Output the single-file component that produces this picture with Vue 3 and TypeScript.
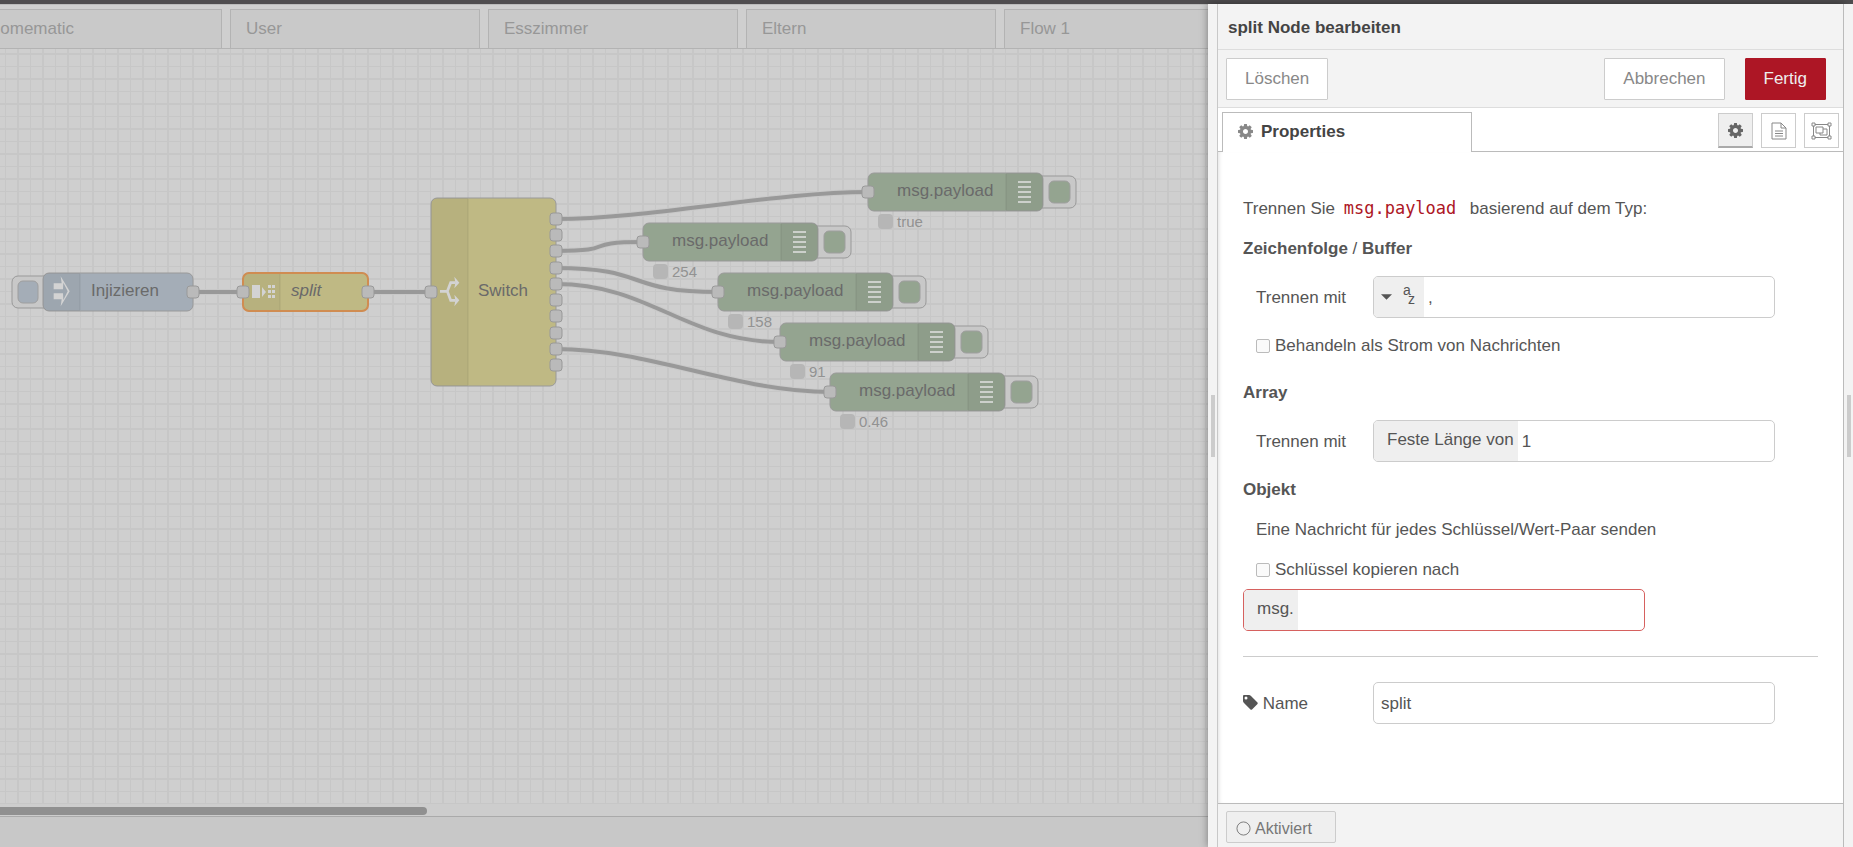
<script setup lang="ts">
import { ref } from 'vue'

interface DebugNode { x: number; y: number; status: string; port: number }

const tabs = ['Homematic', 'User', 'Esszimmer', 'Eltern', 'Flow 1']

const debugNodes: DebugNode[] = [
  { x: 868, y: 124, status: 'true', port: 0 },
  { x: 643, y: 174, status: '254', port: 2 },
  { x: 718, y: 224, status: '158', port: 3 },
  { x: 780, y: 274, status: '91', port: 4 },
  { x: 830, y: 324, status: '0.46', port: 8 },
]

const switchX = 556
const portY = (i: number): number => Math.round(169.75 + 16.25 * i)
const switchPorts = Array.from({ length: 10 }, (_, i) => portY(i))

const NODE_WIDTH = 125
function wire(x1: number, y1: number, x2: number, y2: number): string {
  const distance = Math.hypot(x2 - x1, y2 - y1)
  const scale = distance < NODE_WIDTH ? 0.75 * (distance / NODE_WIDTH) : 0.75
  const c = Math.round(scale * NODE_WIDTH)
  return `M${x1} ${y1}C${x1 + c} ${y1} ${x2 - c} ${y2} ${x2} ${y2}`
}

const wires = [
  wire(193, 243, 243, 243),
  wire(368, 243, 431, 243),
  ...debugNodes.map((n) => wire(switchX, portY(n.port), n.x, n.y + 19)),
]

const separator = ref(',')
const arrayLength = ref('1')
const keyTarget = ref('')
const nodeName = ref('split')
const stream = ref(false)
const copyKey = ref(false)

const cog =
  'M1024 640q0 106-75 181t-181 75-181-75-75-181 75-181 181-75 181 75 75 181zm512-109v222q0 12-8 23t-20 13l-185 28q-19 54-39 91 35 50 107 138 10 12 10 25t-9 23q-27 37-99 108t-94 71q-12 0-26-9l-138-108q-44 23-91 38-16 136-29 186-7 28-36 28h-222q-14 0-24.5-8.500t-11.500-21.500l-28-184q-49-16-90-37l-141 107q-10 9-25 9-14 0-25-11-126-114-165-168-7-10-7-23 0-12 8-23 15-21 51-66.500t54-70.500q-27-50-41-99l-183-27q-13-2-21-12.500t-8-23.500v-222q0-12 8-23t19-13l186-28q14-46 39-92-40-57-107-138-10-12-10-24 0-10 9-23 26-36 98.500-107.500t94.500-71.500q13 0 26 10l138 107q44-23 91-38 16-136 29-186 7-28 36-28h222q14 0 24.500 8.500t11.500 21.500l28 184q49 16 90 37l142-107q9-9 24-9 13 0 25 10 129 119 165 170 7 8 7 22 0 12-8 23-15 21-51 66.500t-54 70.500q26 50 41 98l183 28q13 2 21 12.500t8 23.500z'
</script>

<template>
  <div class="editor">
    <div class="topbar"></div>
    <div class="main">
      <main class="workspace">
        <nav class="flow-tabs">
          <a v-for="t in tabs" :key="t" href="#" class="flow-tab">{{ t }}</a>
        </nav>
        <svg class="canvas" role="img" aria-label="Flow">
          <defs>
            <pattern id="grid" width="25" height="25" patternUnits="userSpaceOnUse">
              <rect class="grid-line" x="17" y="0" width="2" height="25" />
              <rect class="grid-line" x="5" y="0" width="1" height="25" />
              <rect class="grid-line" x="0" y="4" width="25" height="2" />
              <rect class="grid-line" x="0" y="17" width="25" height="1" />
            </pattern>
          </defs>
          <rect width="100%" height="100%" fill="url(#grid)" />

          <path v-for="w in wires" :key="w" class="wire-halo" :d="w" />
          <path v-for="w in wires" :key="w" class="wire" :d="w" />

          <!-- inject node -->
          <rect class="button-frame" x="12" y="227" width="44" height="32" rx="6" />
          <rect class="button-face inject" x="18" y="232" width="20" height="22" rx="5" />
          <rect class="node inject" x="43" y="224" width="150" height="38" rx="6" />
          <path class="shade" d="M80 224H49a6 6 0 0 0-6 6v26a6 6 0 0 0 6 6H80z" />
          <path class="divider" d="M80 225v36" />
          <svg x="53" y="227" width="18" height="32" viewBox="0 0 54 96">
            <path class="glyph" fill-rule="evenodd" d="M2 22H26L23 1L50 46L23 91L26 70H2V52H30L31 72L44 46L31 20L30 40H2Z" />
          </svg>
          <text class="label" x="91" y="247">Injizieren</text>
          <rect class="port" x="187" y="237" width="12" height="12" rx="3" />

          <!-- split node -->
          <rect class="node function" x="243" y="224" width="125" height="38" rx="6" />
          <path class="shade" d="M280 224H249a6 6 0 0 0-6 6v26a6 6 0 0 0 6 6H280z" />
          <path class="divider" d="M280 225v36" />
          <rect class="selection" x="243" y="224" width="125" height="38" rx="6" />
          <path class="glyph" d="M252 236h8v13h-8zM262 238l4 5-4 5zM268 236h3v3h-3zM272 236h3v3h-3zM268 241h3v3h-3zM272 241h3v3h-3zM268 246h3v3h-3zM272 246h3v3h-3z" />
          <text class="label italic" x="291" y="247">split</text>
          <rect class="port" x="237" y="237" width="12" height="12" rx="3" />
          <rect class="port" x="362" y="237" width="12" height="12" rx="3" />

          <!-- switch node -->
          <rect class="node function" x="431" y="149" width="125" height="188" rx="6" />
          <path class="shade" d="M468 149H437a6 6 0 0 0-6 6v176a6 6 0 0 0 6 6H468z" />
          <path class="divider" d="M468 150v186" />
          <svg x="440" y="227" width="20" height="32" viewBox="0 0 60 96">
            <path class="branch" d="M0 46H22M22 46L32 20H47M22 46L32 73H47" />
            <path class="glyph" d="M43 2L58 20L43 37L46 20ZM43 56L58 73L43 91L46 73Z" />
          </svg>
          <text class="label" x="478" y="247">Switch</text>
          <rect class="port" x="425" y="237" width="12" height="12" rx="3" />
          <rect v-for="y in switchPorts" :key="y" class="port" x="550" :y="y - 6" width="12" height="12" rx="3" />

          <!-- debug nodes -->
          <svg v-for="n in debugNodes" :key="n.x" class="debug" :x="n.x" :y="n.y" width="210" height="60">
            <rect class="button-frame" x="165" y="3" width="43" height="32" rx="6" />
            <rect class="button-face output" x="181" y="8" width="21" height="22" rx="5" />
            <rect class="node output" x="0" y="0" width="175" height="38" rx="6" />
            <path class="shade" d="M138 0H169a6 6 0 0 1 6 6v26a6 6 0 0 1-6 6H138z" />
            <path class="divider" d="M138 1v36" />
            <path class="bars" d="M150 9h13M150 14h13M150 19h13M150 24h13M150 29h13" />
            <text class="label" x="29" y="23">msg.payload</text>
            <rect class="port" x="-6" y="13" width="12" height="12" rx="3" />
            <rect class="status-dot" x="10" y="41" width="15" height="15" rx="4" />
            <text class="status" x="29" y="54">{{ n.status }}</text>
          </svg>
        </svg>
        <div class="scroll-track"><div class="scroll-thumb"></div></div>
        <footer class="workspace-footer"></footer>
      </main>

      <aside class="tray">
        <div class="tray-grip"><span class="grip"></span></div>
        <form class="tray-panel" @submit.prevent>
          <h1 class="tray-title">split Node bearbeiten</h1>
          <div class="tray-toolbar">
            <button type="button" class="btn">Löschen</button>
            <span class="actions">
              <button type="button" class="btn">Abbrechen</button>
              <button type="submit" class="btn primary">Fertig</button>
            </span>
          </div>
          <div class="tray-tabs">
            <div class="tray-tab">
              <svg class="icon" viewBox="0 -128 1536 1536"><path fill-rule="evenodd" :d="cog" /></svg>
              Properties
            </div>
            <div class="tray-tab-buttons">
              <button type="button" class="square active" aria-label="Properties">
                <svg class="icon" viewBox="0 -128 1536 1536"><path fill-rule="evenodd" :d="cog" /></svg>
              </button>
              <button type="button" class="square" aria-label="Description">
                <svg class="outline doc" viewBox="0 0 16 18">
                  <path d="M1 1H10L15 6V17H1ZM10 1V6H15M4 9H12M4 11.500H12M4 14H12" />
                </svg>
              </button>
              <button type="button" class="square" aria-label="Appearance">
                <svg class="outline group" viewBox="0 0 21 18">
                  <path d="M4 2.500H17M4 15.500H17M2.500 4V14M18.500 4V14M1 1H4V4H1ZM17 1H20V4H17ZM1 14H4V17H1ZM17 14H20V17H17ZM5 5H12V11H5ZM12 7H16V13H9V11" />
                </svg>
              </button>
            </div>
          </div>

          <div class="tray-body">
            <p class="line">Trennen Sie <code>msg.payload</code>&nbsp; basierend auf dem Typ:</p>
            <p class="line"><b>Zeichenfolge</b> / <b>Buffer</b></p>
            <div class="row indent">
              <label for="sep">Trennen mit</label>
              <div class="typed">
                <button type="button" class="type" aria-label="Typ">
                  <svg class="caret" viewBox="0 0 12 6"><path d="M0 0H12L6 6Z" /></svg>
                  <svg class="az" viewBox="0 0 13 20"><text x="0" y="9">a</text><text x="5" y="18">z</text></svg>
                </button>
                <input id="sep" v-model="separator" type="text" />
              </div>
            </div>
            <label class="check"><input v-model="stream" type="checkbox" />Behandeln als Strom von Nachrichten</label>
            <p class="line section"><b>Array</b></p>
            <div class="row indent">
              <label for="len">Trennen mit</label>
              <div class="typed">
                <span class="type fixed">Feste Länge von</span>
                <input id="len" v-model="arrayLength" type="text" />
              </div>
            </div>
            <p class="line"><b>Objekt</b></p>
            <p class="line indent">Eine Nachricht für jedes Schlüssel/Wert-Paar senden</p>
            <div class="key-group">
              <label class="check"><input v-model="copyKey" type="checkbox" />Schlüssel kopieren nach</label>
              <div class="typed invalid">
                <span class="type fixed">msg.</span>
                <input v-model="keyTarget" type="text" aria-label="Schlüssel kopieren nach" />
              </div>
            </div>
            <hr />
            <div class="row">
              <label for="name">
                <svg class="icon tag" viewBox="0 0 15 15">
                  <path fill-rule="evenodd" d="M0 1Q0 0 1 0H6Q7 0 8 1L14.500 7.500Q15 8.200 14.500 9L9 14.500Q8.200 15 7.500 14.500L1 8Q0 7 0 6ZM3 1.500A1.500 1.500 0 1 0 3 4.500A1.500 1.500 0 1 0 3 1.500Z" />
                </svg>
                Name
              </label>
              <div class="typed"><input id="name" v-model="nodeName" type="text" /></div>
            </div>
          </div>

          <div class="tray-footer">
            <button type="button" class="toggle">
              <svg class="ring" viewBox="0 0 16 16"><circle cx="8" cy="8" r="7" /></svg>
              Aktiviert
            </button>
          </div>
        </form>
      </aside>
      <div class="sidebar-grip"><span class="grip"></span></div>
    </div>
  </div>
</template>

<style>
body {
  margin: 0;
}
</style>

<style scoped>
.editor,
.editor * {
  box-sizing: border-box;
}
.editor {
  display: flex;
  flex-direction: column;
  height: 100vh;
  overflow: hidden;
  font-family: 'Liberation Sans', Arial, sans-serif;
  font-size: 17px;
  line-height: 25px;
  color: #555;
  background: #f3f3f3;
}
.editor button,
.editor input {
  font: inherit;
  color: inherit;
  margin: 0;
}
.topbar {
  flex: none;
  height: 4px;
  background: #4f4d4f;
}
.main {
  flex: 1;
  display: flex;
  min-height: 0;
}

.workspace {
  flex: 1;
  min-width: 0;
  display: flex;
  flex-direction: column;
  background: #cfcfcf;
}
.flow-tabs {
  flex: none;
  display: flex;
  gap: 8px;
  height: 45px;
  padding-top: 4px;
  margin-left: -28px;
  border-top: 1px solid #bbb;
  border-bottom: 1px solid #b3b3b3;
  overflow: hidden;
}
.flow-tab {
  flex: none;
  width: 250px;
  padding: 6px 15px;
  border: 1px solid #b3b3b3;
  border-bottom: 0;
  background: #c9c9c9;
  color: #979797;
  text-decoration: none;
}
.canvas {
  flex: 1;
  min-height: 0;
  width: 100%;
}
.debug {
  overflow: visible;
}
.grid-line {
  fill: #c7c7c7;
}
.wire,
.wire-halo,
.selection,
.branch,
.bars,
.divider {
  fill: none;
}
.wire {
  stroke: #999;
  stroke-width: 4;
}
.wire-halo {
  stroke: #c9c9c9;
  stroke-width: 6;
}
.node {
  stroke: #999;
}
.inject {
  fill: #a4adb7;
}
.function {
  fill: #bfb984;
}
.output {
  fill: #94a490;
}
.button-frame {
  fill: #c8c8c8;
  stroke: #999;
}
.button-face {
  stroke: #9e9e9e;
}
.selection {
  stroke: #d08c51;
  stroke-width: 2;
}
.shade {
  fill: #000;
  fill-opacity: 0.04;
}
.divider {
  stroke: #000;
  stroke-opacity: 0.08;
}
.glyph {
  fill: #d3d3d3;
}
.branch {
  stroke: #d3d3d3;
  stroke-width: 8;
}
.bars {
  stroke: #ccd0cb;
  stroke-width: 2;
}
.port {
  fill: #bababa;
  stroke: #999;
}
.label {
  fill: #6a6a6a;
}
.italic {
  font-style: italic;
}
.status-dot {
  fill: #b6b6b6;
}
.status {
  fill: #929292;
  font-size: 15px;
}
.scroll-track {
  flex: none;
  height: 12px;
  padding: 3px 0 1px;
  background: #cdcdcd;
}
.scroll-thumb {
  width: 427px;
  height: 8px;
  border-radius: 0 4px 4px 0;
  background: #909090;
}
.workspace-footer {
  flex: none;
  height: 31px;
  border-top: 1px solid #aaa;
  background: #c8c8c8;
}

.tray {
  flex: none;
  display: flex;
  width: 636px;
  position: relative;
  border-right: 1px solid #bbb;
  box-shadow: 0 0 8px rgba(0, 0, 0, 0.4);
}
.tray-grip,
.sidebar-grip {
  flex: none;
  display: flex;
  align-items: center;
  justify-content: center;
  width: 10px;
  background: #f3f3f3;
}
.tray-grip {
  border-right: 1px solid #c8c8c8;
}
.sidebar-grip {
  position: relative;
  width: 9px;
}
.grip {
  width: 4px;
  height: 62px;
  background: #ccc;
}
.tray-panel {
  flex: 1;
  display: flex;
  flex-direction: column;
  min-width: 0;
  background: #fff;
}
.tray-title {
  flex: none;
  height: 46px;
  margin: 0;
  padding: 11px 10px 9px;
  border-bottom: 1px solid #ddd;
  background: #f3f3f3;
  color: #444;
  font-size: 17px;
  line-height: 25px;
}
.tray-toolbar {
  flex: none;
  display: flex;
  justify-content: space-between;
  align-items: center;
  height: 58px;
  padding: 0 17px 0 8px;
  border-bottom: 1px solid #ddd;
  background: #f3f3f3;
}
.actions {
  display: flex;
  gap: 20px;
}
.btn {
  height: 42px;
  padding: 0 18px;
  border: 1px solid #ccc;
  border-radius: 1px;
  background: #fff;
}
.editor .btn {
  color: #888;
}
.editor .primary {
  border-color: #ad1625;
  background: #ad1625;
  color: #eee;
}
.tray-tabs {
  flex: none;
  display: flex;
  justify-content: space-between;
  height: 44px;
  padding: 4px 4px 0;
  border-bottom: 1px solid #bbb;
}
.tray-tab {
  display: flex;
  gap: 8px;
  width: 250px;
  height: 40px;
  padding: 6px 15px;
  border: 1px solid #bbb;
  border-bottom: 0;
  background: #fff;
  color: #444;
  font-weight: bold;
}
.tray-tab .icon {
  color: #888;
  margin-top: 5px;
}
.tray-tab-buttons {
  display: flex;
  gap: 8px;
  padding-top: 1px;
}
.square {
  display: flex;
  align-items: center;
  justify-content: center;
  width: 35px;
  height: 35px;
  padding: 0;
  border: 1px solid #ccc;
  background: #fff;
}
.editor .square {
  color: #888;
}
.editor .active {
  border-bottom: 2px solid #aaa;
  background: #efefef;
  color: #666;
}
.icon {
  width: 15px;
  height: 15px;
  fill: currentColor;
}
.outline {
  fill: none;
  stroke: currentColor;
  stroke-width: 1;
}
.doc {
  width: 16px;
  height: 18px;
}
.group {
  width: 21px;
  height: 18px;
}

.tray-body {
  flex: 1;
  display: flex;
  flex-direction: column;
  gap: 15px;
  min-height: 0;
  padding: 44px 25px 0;
  box-shadow: inset 4px 0 4px -3px rgba(0, 0, 0, 0.12);
}
.line {
  margin: 0;
}
.section {
  margin-top: 7px;
}
code {
  padding: 0 4px;
  font-family: 'DejaVu Sans Mono', monospace;
  font-size: 17px;
  line-height: 20px;
  color: #ad1625;
}
.indent {
  padding-left: 13px;
}
.row {
  display: flex;
  align-items: center;
}
.row label {
  width: 130px;
}
.row.indent label {
  width: 117px;
}
.row .typed {
  flex: none;
}
.typed {
  display: flex;
  width: 402px;
  height: 42px;
  border: 1px solid #ccc;
  border-radius: 5px;
  background: #fff;
  overflow: hidden;
}
.typed input {
  flex: 1;
  min-width: 0;
  padding: 0 4px;
  border: 0;
  outline: 0;
  background: transparent;
}
.typed input:only-child {
  padding-left: 7px;
}
.invalid {
  border-color: #d6615f;
}
.type {
  display: flex;
  align-items: center;
  gap: 11px;
  padding: 0 8px 0 7px;
  border: 0;
  background: #efefef;
}
.fixed {
  padding: 0 4px 3px 13px;
}
.caret {
  width: 11px;
  height: 6px;
  fill: #555;
}
.az {
  width: 13px;
  height: 20px;
  margin-bottom: 2px;
  overflow: visible;
  fill: #555;
  font-size: 14px;
}
.check {
  display: flex;
  align-items: center;
  gap: 5px;
  padding-left: 13px;
}
.check input {
  appearance: none;
  width: 14px;
  height: 14px;
  border: 1px solid #bbb;
  border-radius: 2px;
  background: #fafafa;
}
.key-group {
  display: flex;
  flex-direction: column;
  gap: 7px;
}
hr {
  width: 100%;
  height: 1px;
  margin: 10px 0;
  border: 0;
  background: #ccc;
}
.tag {
  vertical-align: -1px;
}
.tray-footer {
  flex: none;
  height: 44px;
  padding: 7px 8px;
  border-top: 1px solid #bbb;
  background: #f3f3f3;
}
.toggle {
  display: flex;
  align-items: center;
  gap: 4px;
  width: 110px;
  height: 32px;
  padding: 2px 9px 0;
  border: 1px solid #ccc;
  border-radius: 2px;
  background: #efefef;
}
.editor .toggle {
  color: #777;
  font-size: 16px;
}
.ring {
  width: 15px;
  height: 15px;
  fill: none;
  stroke: #777;
}
</style>
